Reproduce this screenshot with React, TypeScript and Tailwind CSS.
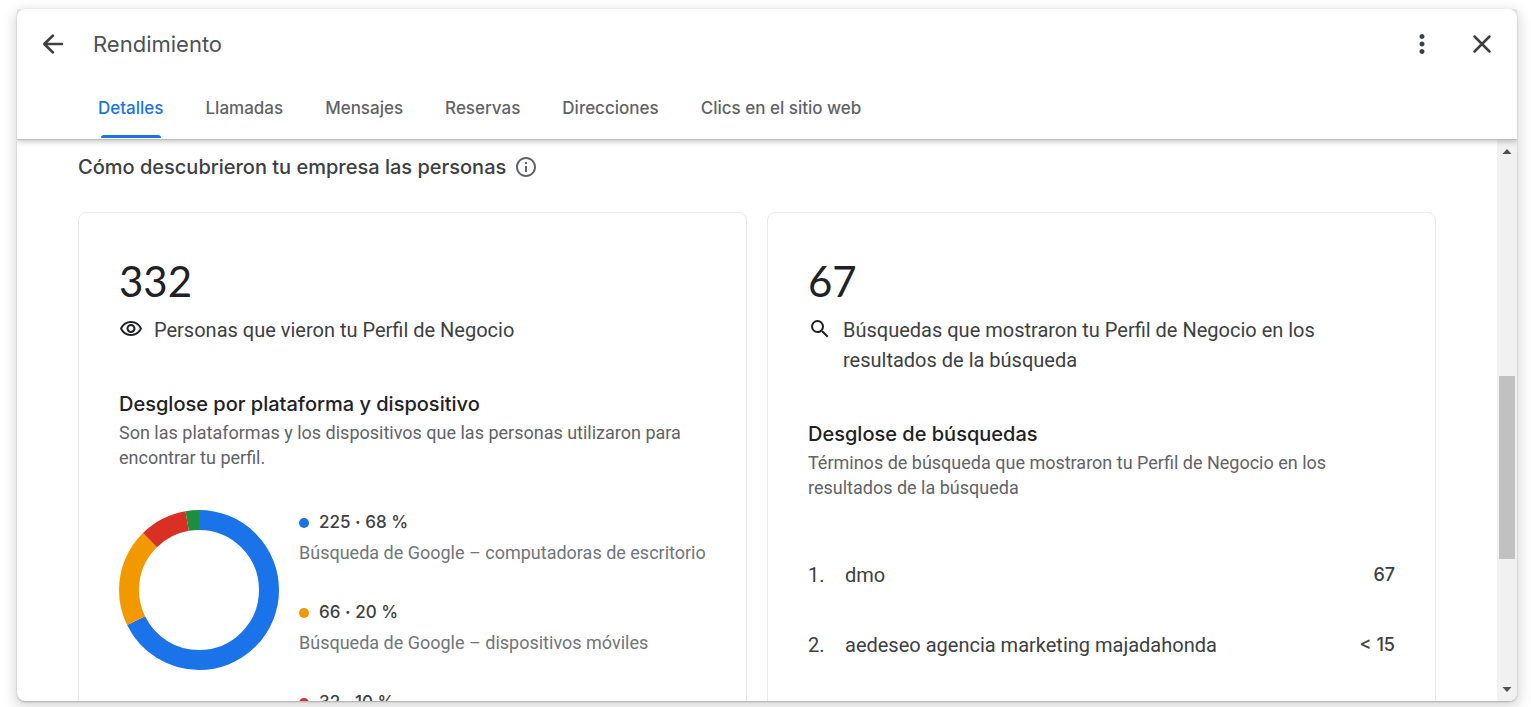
import { MdInfoOutline, MdMoreVert, MdOutlineVisibility, MdSearch } from "react-icons/md";

const tabs = [
  "Detalles",
  "Llamadas",
  "Mensajes",
  "Reservas",
  "Direcciones",
  "Clics en el sitio web",
];

const platforms = [
  { count: 225, percent: 68, label: "Búsqueda de Google – computadoras de escritorio", color: "#1a73e8", dot: "bg-[#1a73e8]" },
  { count: 66, percent: 20, label: "Búsqueda de Google – dispositivos móviles", color: "#f29900", dot: "bg-[#f29900]" },
  { count: 32, percent: 10, label: "Google Maps – dispositivos móviles", color: "#d93025", dot: "bg-[#d93025]" },
  { count: 9, percent: 3, label: "Google Maps – computadoras de escritorio", color: "#1e8e3e", dot: "bg-[#1e8e3e]" },
];

const searches = [
  { term: "dmo", value: "67" },
  { term: "aedeseo agencia marketing majadahonda", value: "< 15" },
];

function DonutChart() {
  const total = platforms.reduce((sum, p) => sum + p.count, 0);
  let start = 0;

  return (
    <svg className="w-40 h-40 shrink-0" viewBox="0 0 160 160" fill="none" role="img" aria-label="Desglose por plataforma">
      <g transform="rotate(-90 80 80)">
        {platforms.map((p) => {
          const offset = start;
          start += p.count;
          return (
            <circle
              key={p.color}
              cx="80"
              cy="80"
              r="70"
              stroke={p.color}
              strokeWidth="20"
              pathLength={total}
              strokeDasharray={`${p.count} ${total - p.count}`}
              strokeDashoffset={-offset}
            />
          );
        })}
      </g>
    </svg>
  );
}

function Header() {
  return (
    <header className="relative z-10 shrink-0 bg-white rounded-t-lg border-b border-[#bdbdbd] shadow-[0_1px_6px_rgba(0,0,0,0.28)] [clip-path:inset(0_0_-12px_0)]">
      <div className="flex items-center h-[70px] pl-5 pr-[19px] text-[#3c4043]">
        <button type="button" aria-label="Atrás" className="w-8 h-8 flex items-center justify-center">
          <svg className="w-6 h-6" viewBox="0 0 24 24" fill="none" stroke="currentColor" strokeWidth="2.5" strokeLinecap="round" strokeLinejoin="round">
            <path d="M21 12H3.500M12 3.500L3.200 12l8.800 8.500" />
          </svg>
        </button>
        <h1 className="ml-6 grow text-[22px] text-[#4d5156]">Rendimiento</h1>
        <button type="button" aria-label="Más opciones" className="w-8 h-8 flex items-center justify-center">
          <MdMoreVert className="w-[30px] h-[30px]" />
        </button>
        <button type="button" aria-label="Cerrar" className="ml-7 w-8 h-8 flex items-center justify-center">
          <svg className="w-6 h-6" viewBox="0 0 24 24" fill="none" stroke="currentColor" strokeWidth="2.5" strokeLinecap="round">
            <path d="M4.500 4.500l15 15M19.500 4.500l-15 15" />
          </svg>
        </button>
      </div>
      <nav className="flex h-[60px] pl-[60px]">
        {tabs.map((tab, i) => (
          <button
            key={tab}
            type="button"
            className={`relative px-[21px] text-[17px] font-medium whitespace-nowrap ${
              i === 0 ? "text-[#1a73e8]" : "text-[#5f6368]"
            }`}
          >
            {tab}
            {i === 0 && (
              <span className="absolute bottom-px left-6 right-6 h-[3px] rounded-t bg-[#1a73e8]" />
            )}
          </button>
        ))}
      </nav>
    </header>
  );
}

function Scrollbar() {
  return (
    <div className="w-5 shrink-0 flex flex-col items-center bg-[#f1f1f1] text-[#505050]">
      <svg className="w-5 h-5 shrink-0" viewBox="0 0 20 20" fill="currentColor">
        <path d="M5.500 14l4.500-5 4.500 5z" />
      </svg>
      <div className="w-full grow flex flex-col px-0.5">
        <div className="grow-[216]" />
        <div className="grow-[182] bg-[#c1c1c1]" />
        <div className="grow-[122]" />
      </div>
      <svg className="w-5 h-5 shrink-0" viewBox="0 0 20 20" fill="currentColor">
        <path d="M5.500 6l4.500 5 4.500-5z" />
      </svg>
    </div>
  );
}

export default function App() {
  return (
    <div className="h-screen overflow-hidden flex flex-col bg-white pl-[17px] pt-[9px] pb-1.5 pr-3.5 font-['Inter',sans-serif]">
      <div className="grow min-h-0 flex flex-col rounded-lg bg-white shadow-[0_1px_2px_rgba(0,0,0,0.25),0_4px_12px_4px_rgba(0,0,0,0.12)]">
        <Header />
        <div className="grow min-h-0 flex overflow-hidden rounded-b-lg">
          <main className="grow min-w-0 overflow-hidden px-[61px] pt-[11px]">
            <div className="flex items-center gap-2 h-8 text-[#3c4043]">
              <h2 className="text-xl font-medium">Cómo descubrieron tu empresa las personas</h2>
              <MdInfoOutline className="w-6 h-6 text-[#5f6368]" />
            </div>

            <div className="mt-[29px] grid grid-cols-2 gap-5">
              <section className="border border-[#e8eaed] rounded-lg p-10">
                <div className="font-['Lato',sans-serif] text-[42px] leading-[56px] text-[#202124]">332</div>
                <div className="mt-1.5 flex items-start text-[#3c4043]">
                  <MdOutlineVisibility className="w-6 h-6 mt-0.5 shrink-0 text-[#202124]" />
                  <p className="ml-[11px] font-['Roboto',sans-serif] text-xl leading-[30px]">
                    Personas que vieron tu Perfil de Negocio
                  </p>
                </div>
                <h3 className="mt-11 text-xl leading-[30px] font-medium text-[#202124]">
                  Desglose por plataforma y dispositivo
                </h3>
                <p className="mt-px font-['Roboto',sans-serif] text-lg leading-[25px] text-[#5f6368]">
                  Son las plataformas y los dispositivos que las personas utilizaron para encontrar tu perfil.
                </p>
                <div className="mt-10 flex items-start gap-5">
                  <DonutChart />
                  <ul className="flex flex-col gap-[33px]">
                    {platforms.map((p) => (
                      <li key={p.label}>
                        <div className="flex items-center gap-2.5 h-[26px] text-[17px] font-medium text-[#3c4043]">
                          <span className={`w-2.5 h-2.5 rounded-full ${p.dot}`} />
                          <span>
                            {p.count} <b>·</b> {p.percent} %
                          </span>
                        </div>
                        <div className="mt-[3px] font-['Roboto',sans-serif] text-lg leading-7 text-[#70757a] whitespace-nowrap">
                          {p.label}
                        </div>
                      </li>
                    ))}
                  </ul>
                </div>
              </section>

              <section className="border border-[#e8eaed] rounded-lg p-10">
                <div className="font-['Lato',sans-serif] text-[42px] leading-[56px] text-[#202124]">67</div>
                <div className="mt-1.5 flex items-start text-[#3c4043]">
                  <MdSearch className="w-6 h-6 mt-0.5 shrink-0 text-[#202124]" />
                  <p className="ml-[11px] font-['Roboto',sans-serif] text-xl leading-[30px]">
                    Búsquedas que mostraron tu Perfil de Negocio en los resultados de la búsqueda
                  </p>
                </div>
                <h3 className="mt-11 text-xl leading-[30px] font-medium text-[#202124]">
                  Desglose de búsquedas
                </h3>
                <p className="mt-px font-['Roboto',sans-serif] text-lg leading-[25px] text-[#5f6368]">
                  Términos de búsqueda que mostraron tu Perfil de Negocio en los resultados de la búsqueda
                </p>
                <ol className="mt-10">
                  {searches.map((s, i) => (
                    <li key={s.term} className="flex items-center h-[70px] font-['Roboto',sans-serif] text-xl text-[#3c4043]">
                      <span className="w-[37px]">{i + 1}.</span>
                      <span className="grow">{s.term}</span>
                      <span className="font-['Inter',sans-serif] text-lg font-medium">{s.value}</span>
                    </li>
                  ))}
                </ol>
              </section>
            </div>
          </main>
          <Scrollbar />
        </div>
      </div>
    </div>
  );
}
